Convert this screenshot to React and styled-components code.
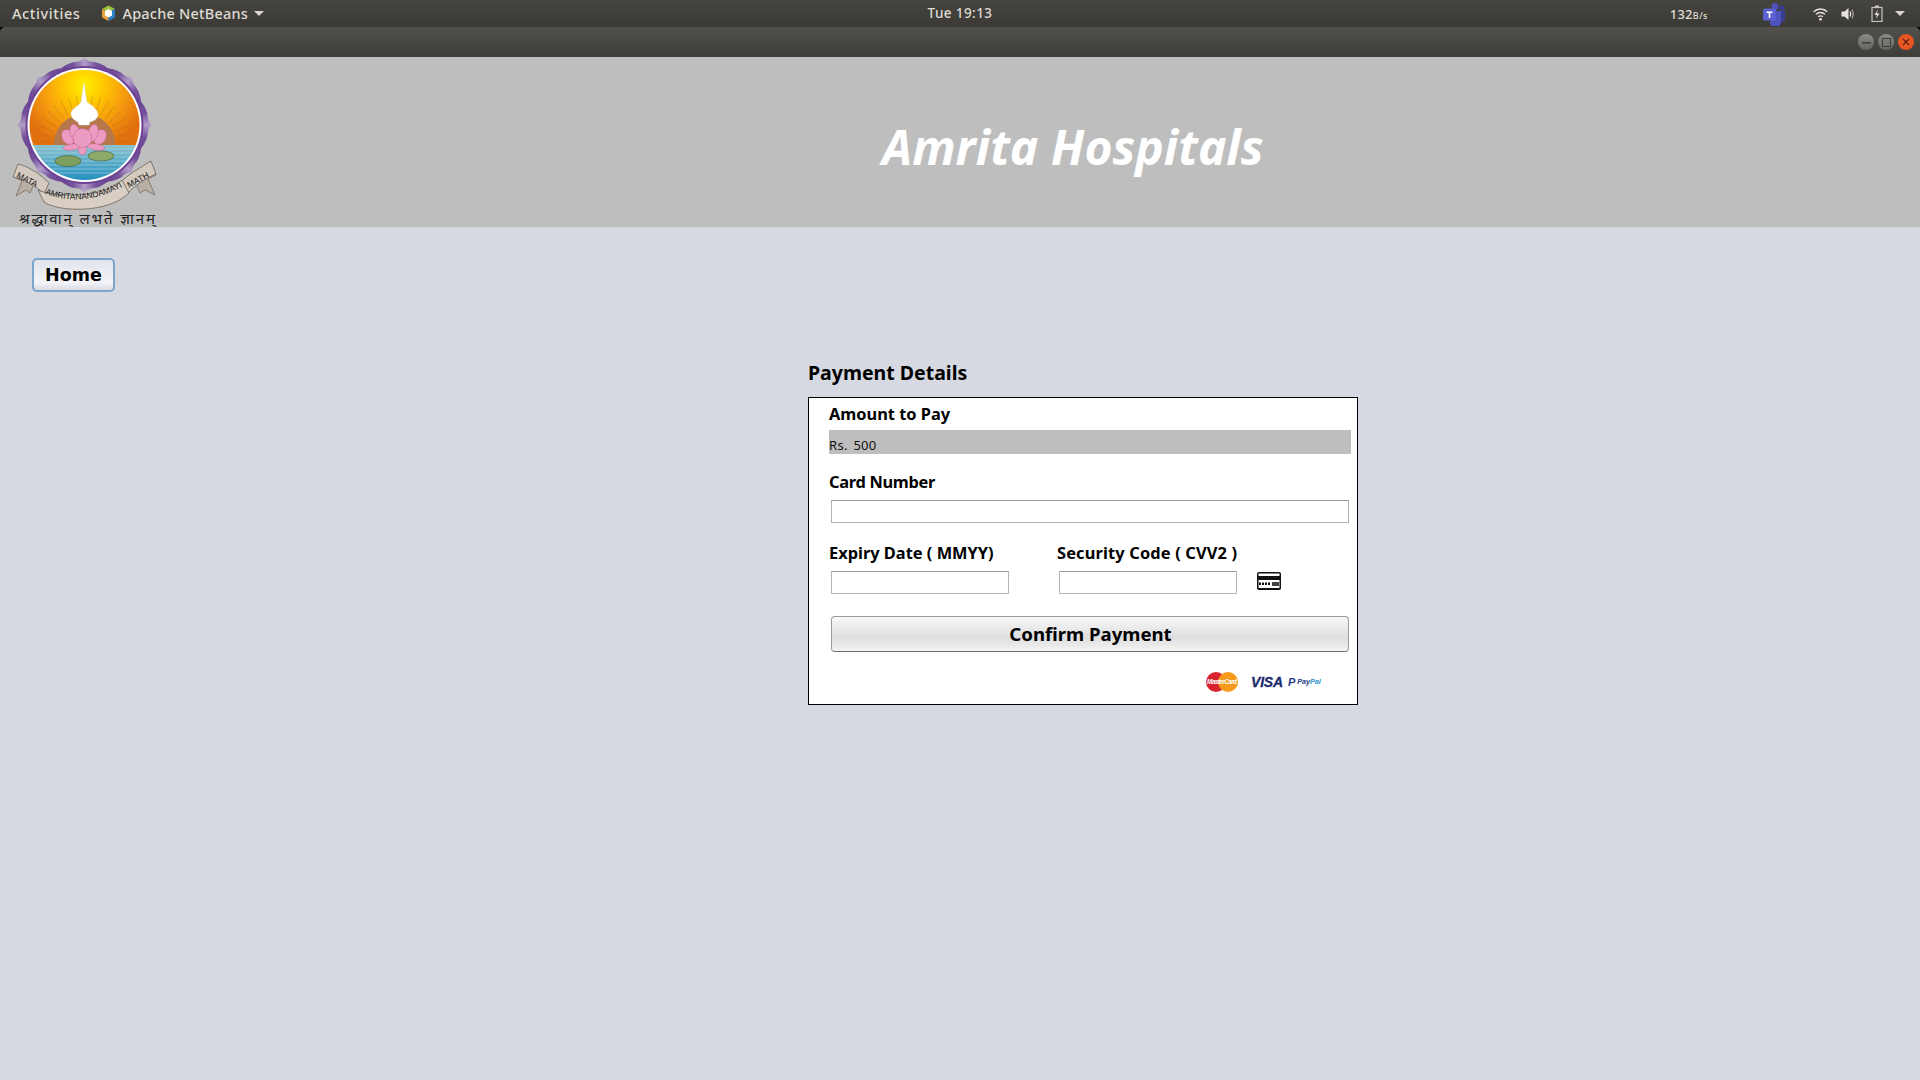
import React from "react";
import styled, { createGlobalStyle } from "styled-components";

const Global = createGlobalStyle`
  html, body { margin: 0; padding: 0; height: 100%; background: #d6d9e2; }
  #root { height: 100%; }
  * { box-sizing: border-box; }
`;
const UI = `"Noto Sans", "Open Sans", sans-serif`;

const Page = styled.div`
  width: 1920px; height: 1080px; overflow: hidden; display: flex; flex-direction: column;
  font-family: ${UI}; background: #d6d9e2;
`;
const TopBar = styled.div`
  height: 27px; flex: none; background: linear-gradient(#45443f, #3b3a36);
  display: grid; grid-template-columns: 1fr auto 1fr; align-items: center;
  color: #dfdbd2; font-size: 14.5px; font-weight: 500;
`;
const TopLeft = styled.div`display: flex; align-items: center; padding-left: 12px; height: 26px;`;
const TopItem = styled.span`letter-spacing: ${p => p.$sp}px; white-space: nowrap; line-height: 24px; transform: translateY(-1px);`;
const AppMenu = styled.div`display: flex; align-items: center; margin-left: 21px; gap: 6px;`;
const Caret = styled.span`
  display: inline-block; width: 0; height: 0;
  border-left: 5px solid transparent; border-right: 5px solid transparent; border-top: 5px solid #d8d5cd;
  margin-left: ${p => p.$ml || 0}px;
`;
const Clock = styled.span`font-size: 13.5px; letter-spacing: 0.4px; transform: translateY(-1px);`;
const TopRight = styled.div`display: flex; align-items: center; justify-content: flex-end; height: 100%;`;
const Speed = styled.span`
  font-size: 13px; margin-right: 54px; display: flex; align-items: baseline;
  letter-spacing: .2px;
  small { font-size: 9px; letter-spacing: .5px; }
`;
const Tray = styled.div`display: flex; align-items: center; padding-right: 15px;`;
const TrayItem = styled.span`display: flex; margin-left: ${p => p.$ml}px;`;

const TitleBar = styled.div`height: 30px; flex: none; background: #000;`;
const TitleInner = styled.div`
  height: 100%; border-radius: 5px 5px 0 0; background: linear-gradient(#53514b, #3d3c38);
  display: flex; justify-content: flex-end; align-items: center; gap: 4px; padding-right: 6px;
`;
const WinBtn = styled.div`
  width: 16px; height: 16px; border-radius: 50%;
  background: ${p => p.$close ? "radial-gradient(#f0622c, #e0491a)" : "linear-gradient(#8b8a85, #65645f)"};
  display: flex; align-items: center; justify-content: center; color: ${p => p.$close ? "#5b1d08" : "#3e3d39"};
`;

const Header = styled.header`
  height: 170px; flex: none; background: #bebebe; display: flex; overflow: hidden; position: relative;
`;
const Title = styled.h1`
  margin: 58px 0 0 882px; font-size: 48px; line-height: 64px; font-weight: 700; font-style: italic; color: #fff;
  white-space: nowrap; height: 64px;
`;

const Main = styled.main`flex: 1; display: flex; flex-direction: column; align-items: flex-start;`;
const HomeBtn = styled.button`
  margin: 31px 0 0 32px; width: 83px; height: 34px; border-radius: 5px;
  border: 2px solid #7ba6cc; background: linear-gradient(#e2e4ec, #f3f4f8 75%, #d9dbe3);
  font: 700 17.5px "DejaVu Sans", sans-serif; color: #000; padding: 0 0 1px;
`;
const Section = styled.section`margin: 70px 0 0 808px; width: 550px;`;
const Heading = styled.h2`margin: 0 0 13px; font-size: 19.5px; line-height: 22px; font-weight: 700; color: #000;`;
const Box = styled.div`
  height: 308px; width: 550px; background: #fff; border: 1px solid #000; padding: 5px 0 0 20px; position: relative;
`;
const Label = styled.div`
  font-size: 16.4px; line-height: 22px; font-weight: 700; color: #000; white-space: nowrap;
  margin-top: ${p => p.$mt || 0}px; letter-spacing: ${p => p.$sp || 0}px;
`;
const Amount = styled.div`
  margin-top: 5px; width: 522px; height: 24px; background: #bebebe; font-size: 13px; line-height: 31px; color: #111;
  letter-spacing: .3px; word-spacing: 2px;
`;
const Input = styled.input`
  display: block; margin: 7px 0 0 2px; width: ${p => p.$w || 518}px; height: 23px;
  border: 1px solid #b5b5b5; border-top-color: #999; background: #fff; padding: 0; outline: none;
`;
const Columns = styled.div`
  margin-top: 19px; display: grid; grid-template-columns: 228px 180px 44px; align-items: start;
`;
const Col = styled.div`min-width: 0;`;
const CardSlot = styled.div`padding: 30px 0 0 20px;`;
const Confirm = styled.button`
  display: block; margin: 21px 0 0 2px; width: 518px; height: 36px; border-radius: 4px;
  border: 1px solid #9a9a9a; border-bottom-color: #6f6f6f;
  background: linear-gradient(#f8f8f8, #dedede 60%, #f3f3f3);
  font: 700 18.6px ${UI}; color: #000; padding: 0 0 2px 1px;
`;
const Brands = styled.div`
  margin: 20px 0 0 377px; display: flex; align-items: center; height: 20px;
`;
const Master = styled.svg`flex: none;`;
const Visa = styled.span`
  font: italic 900 14px/20px "Liberation Sans", sans-serif; color: #1a2a6c; margin-left: 13px; letter-spacing: -.2px;
  -webkit-text-stroke: .3px #1a2a6c;
`;
const PayPal = styled.span`
  display: flex; align-items: center; gap: 2px; margin-left: 5px;
  font: italic 700 7.2px/20px "Liberation Sans", sans-serif; color: #2a8fd0;
  b { color: #1f3c88; font-weight: 700; }
`;
const PayMark = styled.b`font-size: 11px; font-weight: 900;`;

const Logo = () => (
  <svg width="170" height="170" viewBox="0 57 170 170" style={{ flex: "none", position: "absolute", left: 0, top: 0 }}>
    <defs>
      <radialGradient id="sun" gradientUnits="userSpaceOnUse" cx="84" cy="85" r="65">
        <stop offset="0" stopColor="#fff000" /><stop offset="0.3" stopColor="#ffc800" />
        <stop offset="0.65" stopColor="#f59a10" /><stop offset="1" stopColor="#e2700f" />
      </radialGradient>
      <linearGradient id="water" x1="0" y1="0" x2="0" y2="1">
        <stop offset="0" stopColor="#8cc4cf" /><stop offset="1" stopColor="#1f8ec0" />
      </linearGradient>
      <linearGradient id="pet" x1="0" y1="0" x2="1" y2="0">
        <stop offset="0" stopColor="#5f3689" /><stop offset="0.35" stopColor="#74509c" /><stop offset="0.5" stopColor="#b39dc9" /><stop offset="0.65" stopColor="#74509c" /><stop offset="1" stopColor="#5f3689" />
      </linearGradient>
      <clipPath id="disc"><circle cx="84.5" cy="125" r="55" /></clipPath>
      <path id="arc" d="M45 194 Q84 208 124 186" fill="none" />
    </defs>
    {[0, 45, 90, 135, 180, 225, 270, 315].map(a => (
      <path key={a} d="M44 96 Q55 66 74 62 Q81 62 84.5 58 Q88 62 95 62 Q114 66 125 96 L84.5 125Z" fill="url(#pet)" transform={`rotate(${a} 84.5 125)`} />
    ))}
    <circle cx="84.5" cy="125" r="59" fill="#6d4394" />
    <circle cx="84.5" cy="125" r="57" fill="#fff" />
    <g clipPath="url(#disc)">
      <rect x="29" y="70" width="111" height="76" fill="url(#sun)" />
      {Array.from({ length: 19 }, (_, i) => {
        const a = Math.PI * (i + 0.5) / 19;
        return <line key={i} x1={84.5 - Math.cos(a) * 33} y1={145 - Math.sin(a) * 33} x2={84.5 - Math.cos(a) * 50} y2={145 - Math.sin(a) * 50} stroke="#a86f18" strokeWidth="0.5" opacity=".75" />;
      })}
      <circle cx="84.5" cy="145" r="31" fill="#b5784a" />
      <rect x="29" y="145" width="111" height="36" fill="url(#water)" />
      {[149, 153, 157, 161, 165, 169, 173].map(y => <line key={y} x1="29" x2="140" y1={y} y2={y} stroke="#b5dde6" strokeWidth="0.5" />)}
    </g>
    <ellipse cx="68" cy="161" rx="13" ry="5.5" fill="#7e9f5f" stroke="#3f5f3a" strokeWidth=".6" />
    <ellipse cx="101" cy="156" rx="13" ry="5" fill="#8eaa68" stroke="#3f5f3a" strokeWidth=".6" />
    <g fill="#ec9cc2" stroke="#c65c92" strokeWidth=".5">
      <ellipse cx="68" cy="137" rx="6" ry="8" transform="rotate(-30 68 137)" />
      <ellipse cx="100" cy="137" rx="6" ry="8" transform="rotate(30 100 137)" />
      <ellipse cx="75" cy="133" rx="5" ry="9" transform="rotate(-14 75 133)" />
      <ellipse cx="93" cy="133" rx="5" ry="9" transform="rotate(14 93 133)" />
      <ellipse cx="72" cy="147" rx="9" ry="3" transform="rotate(-8 72 147)" />
      <ellipse cx="96" cy="147" rx="9" ry="3" transform="rotate(8 96 147)" />
      <ellipse cx="82.5" cy="150" rx="4" ry="5" />
      <circle cx="82.5" cy="138" r="9.5" />
    </g>
    <path d="M84 83 C85 90 86 98 87 102 C93 106 98 110 98 115 C97 120 93 121 90 122 L89 125 L79 125 L78 122 C74 120 71 118 71 113 C72 108 79 106 81 102 C82 96 82 90 84 83Z" fill="#fff" stroke="#d8d8d8" strokeWidth=".5" />
    <g fontFamily="'Liberation Sans', sans-serif" fill="#1c1c1c">
      <path d="M19 165 L14 177 L22 181 L16 196 L26 190 L30 193 L34 184Z" fill="#b9aea3" stroke="#5f554c" strokeWidth=".6" />
      <path d="M150 161 L156 175 L148 179 L155 195 L145 190 L140 193 L136 184Z" fill="#b9aea3" stroke="#5f554c" strokeWidth=".6" />
      <path d="M18 164 C28 166 40 174 49 183 L44 194 C36 186 26 180 13 177Z" fill="#d3c9be" stroke="#5f554c" strokeWidth=".7" />
      <path d="M120 183 C128 174 140 168 151 161 L156 174 C146 178 134 186 127 194Z" fill="#d3c9be" stroke="#5f554c" strokeWidth=".7" />
      <path d="M38 190 C55 198 105 198 122 180 L129 193 C108 214 58 212 44 202Z" fill="#d8cec4" stroke="#5f554c" strokeWidth=".7" />
      <text x="16" y="177" fontSize="8.5" transform="rotate(27 16 177)">MATA</text>
      <text fontSize="8.4"><textPath href="#arc">AMRITANANDAMAYI</textPath></text>
      <text x="129" y="188" fontSize="8.5" transform="rotate(-28 129 188)">MATH</text>
    </g>
    <text x="19" y="224" fontSize="15" fontFamily="'Noto Sans', 'DejaVu Sans', sans-serif" fill="#222" textLength="136">श्रद्धावान् लभते ज्ञानम्</text>
  </svg>
);

const NetBeans = () => (
  <svg width="15" height="17" viewBox="0 0 15 17">
    <path d="M7.5 0.5 14 4 7.5 7.5 1 4Z" fill="#9ac33c" />
    <path d="M1 4 7.5 7.5 7.5 16 1 12.5Z" fill="#e8a13a" />
    <path d="M14 4 7.5 7.5 7.5 16 14 12.5Z" fill="#2f7fc4" />
    <path d="M7.5 4 11 6 11 10.5 7.5 12.5 4 10.5 4 6Z" fill="#fff" />
  </svg>
);
const Teams = () => (
  <svg width="24" height="24" viewBox="0 0 24 24">
    <circle cx="13" cy="4.5" r="3.5" fill="#4d52ba" />
    <circle cx="20" cy="6" r="2.5" fill="#3a3d94" />
    <path d="M16 9h7v8a4 4 0 0 1-7 2Z" fill="#3a3d94" />
    <path d="M8 9h11v10a5 5 0 0 1-11 2Z" fill="#4d52ba" />
    <rect x="1" y="6.5" width="13" height="12" rx="1.5" fill="#5a60cf" />
    <path d="M4.5 9.5h6v1.4H8.3V16H6.7v-5.1H4.5Z" fill="#fff" />
  </svg>
);
const Wifi = () => (
  <svg width="15" height="14" viewBox="0 0 15 14" fill="none" stroke="#e6e3dc" strokeWidth="1.5">
    <path d="M0.7 4.7C4.5 1 10.5 1 14.3 4.7" />
    <path d="M3 7.3C5.5 5 9.5 5 12 7.3" />
    <path d="M5.2 9.7C6.4 8.6 8.6 8.6 9.8 9.7" />
    <circle cx="7.5" cy="12.3" r="1.4" fill="#e6e3dc" stroke="none" />
  </svg>
);
const Volume = () => (
  <svg width="15" height="14" viewBox="0 0 15 14">
    <path d="M0.5 4.5H3.5L7.5 1V13L3.5 9.5H0.5Z" fill="#e6e3dc" />
    <path d="M9 4.5Q10.5 7 9 9.5" fill="none" stroke="#e6e3dc" strokeWidth="1.4" />
    <path d="M11 2.8Q13.4 7 11 11.2" fill="none" stroke="#a9a69f" strokeWidth="1.2" />
  </svg>
);
const Battery = () => (
  <svg width="12" height="17" viewBox="0 0 12 17">
    <rect x="4" y="0.5" width="4" height="2" fill="#c9c6bf" />
    <rect x="1" y="2.5" width="10" height="14" fill="none" stroke="#c9c6bf" strokeWidth="1.2" />
    <path d="M7 4.5 3.5 10H6L5 14 8.5 8.5H6Z" fill="#e6e3dc" />
  </svg>
);
const CardIcon = () => (
  <svg width="24" height="18" viewBox="0 0 24 18">
    <rect x="0" y="0" width="24" height="18" rx="2" fill="#111" />
    <rect x="1.5" y="1.5" width="21" height="2.5" fill="#fff" />
    <rect x="1.5" y="8" width="21" height="8" fill="#fff" />
    <rect x="2" y="10.5" width="2" height="2.5" fill="#111" /><rect x="5" y="10.5" width="2" height="2.5" fill="#111" />
    <rect x="8" y="10.5" width="2" height="2.5" fill="#111" /><rect x="11" y="10.5" width="2" height="2.5" fill="#111" />
    <rect x="15" y="10" width="7" height="4" fill="#444" />
  </svg>
);
const MasterLogo = () => (
  <Master width="32" height="20" viewBox="0 0 32 20">
    <circle cx="10" cy="10" r="10" fill="#d8232f" />
    <circle cx="22" cy="10" r="10" fill="#f79a1c" />
    <text x="16" y="12.3" textAnchor="middle" fontSize="6.4" fontWeight="700" fontStyle="italic" fontFamily="'Liberation Sans', sans-serif" fill="#fff" textLength="30">MasterCard</text>
  </Master>
);

export default function App() {
  return (
    <Page>
      <Global />
      <TopBar>
        <TopLeft>
          <TopItem $sp={0.6}>Activities</TopItem>
          <AppMenu><NetBeans /><TopItem $sp={0.2}>Apache NetBeans</TopItem><Caret /></AppMenu>
        </TopLeft>
        <Clock>Tue 19:13</Clock>
        <TopRight>
          <Speed>132<small>B/s</small></Speed>
          <Tray>
            <TrayItem $ml={0}><Teams /></TrayItem>
            <TrayItem $ml={27}><Wifi /></TrayItem>
            <TrayItem $ml={13}><Volume /></TrayItem>
            <TrayItem $ml={15}><Battery /></TrayItem>
            <Caret $ml={12} />
          </Tray>
        </TopRight>
      </TopBar>
      <TitleBar>
        <TitleInner>
          <WinBtn><svg width="9" height="9"><rect y="4" width="9" height="1.5" fill="currentColor" /></svg></WinBtn>
          <WinBtn><svg width="9" height="9"><rect x=".5" y=".5" width="8" height="8" fill="none" stroke="currentColor" /></svg></WinBtn>
          <WinBtn $close><svg width="8" height="8"><path d="M1 1 7 7M7 1 1 7" stroke="currentColor" strokeWidth="1.3" /></svg></WinBtn>
        </TitleInner>
      </TitleBar>
      <Header>
        <Logo />
        <Title>Amrita Hospitals</Title>
      </Header>
      <Main>
        <HomeBtn>Home</HomeBtn>
        <Section>
          <Heading>Payment Details</Heading>
          <Box>
            <Label>Amount to Pay</Label>
            <Amount>Rs. 500</Amount>
            <Label $mt={17} $sp={-0.3}>Card Number</Label>
            <Input />
            <Columns>
              <Col>
                <Label>Expiry Date ( MMYY)</Label>
                <Input $w={178} />
              </Col>
              <Col>
                <Label $sp={0.15}>Security Code ( CVV2 )</Label>
                <Input $w={178} />
              </Col>
              <CardSlot><CardIcon /></CardSlot>
            </Columns>
            <Confirm>Confirm Payment</Confirm>
            <Brands>
              <MasterLogo />
              <Visa>VISA</Visa>
              <PayPal><PayMark>P</PayMark><span><b>Pay</b>Pal</span></PayPal>
            </Brands>
          </Box>
        </Section>
      </Main>
    </Page>
  );
}
